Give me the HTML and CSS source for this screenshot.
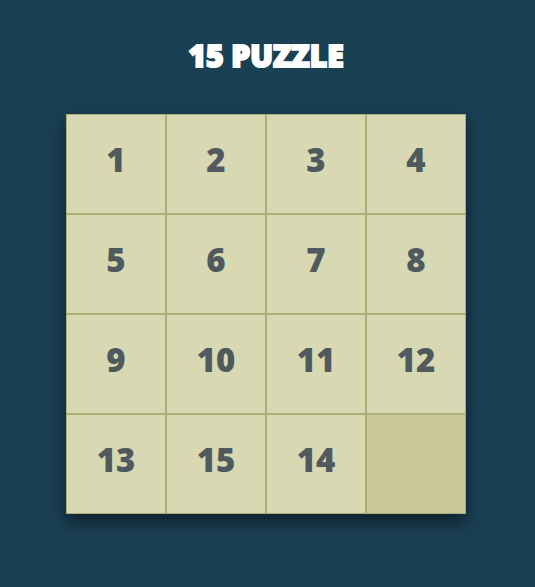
FILE: index.html
```html
<!DOCTYPE html>
<html lang="en">
<head>
<meta charset="utf-8">
<meta name="viewport" content="width=device-width, initial-scale=1">
<title>15 Puzzle</title>
<link rel="stylesheet" href="styles.css">
</head>
<body>
<main class="game">
  <h1 class="title">15 PUZZLE</h1>
  <div class="board">
    <button class="tile">1</button>
    <button class="tile">2</button>
    <button class="tile">3</button>
    <button class="tile">4</button>
    <button class="tile">5</button>
    <button class="tile">6</button>
    <button class="tile">7</button>
    <button class="tile">8</button>
    <button class="tile">9</button>
    <button class="tile">10</button>
    <button class="tile">11</button>
    <button class="tile">12</button>
    <button class="tile">13</button>
    <button class="tile">15</button>
    <button class="tile">14</button>
    <div class="gap"></div>
  </div>
</main>
</body>
</html>
```
FILE: styles.css
```css
* {
  box-sizing: border-box;
}

body {
  margin: 0;
  background: #1a4053;
  font-family: "Baloo Bhaijaan", "Open Sans", sans-serif;
}

.game {
  display: flex;
  flex-direction: column;
  align-items: center;
  gap: 38px;
  padding: 36px 19px 72px 16px;
}

.title {
  margin: 0;
  color: #fff;
  font-size: 30px;
  font-weight: 800;
  line-height: 40px;
  -webkit-text-stroke: 2px #fff;
}

.board {
  display: grid;
  grid-template-columns: repeat(4, 1fr);
  width: 100%;
  max-width: 400px;
  background: #cac79a;
  box-shadow: 0 8px 16px rgba(0, 0, 0, 0.5);
}

.tile,
.gap {
  aspect-ratio: 1;
  border: 1px solid #acae76;
}

.tile {
  padding: 0 0 8px;
  background: #d8d8b3;
  color: #50595e;
  font-family: inherit;
  font-size: 33px;
  font-weight: 800;
  line-height: 40px;
  cursor: pointer;
}
```
